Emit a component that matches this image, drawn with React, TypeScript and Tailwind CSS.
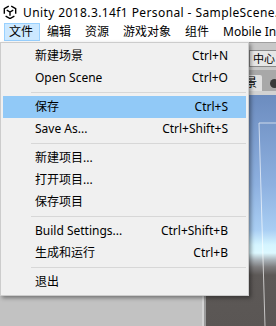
import React from "react";

type Entry =
  | { label: string; shortcut?: string; active?: boolean }
  | "sep";

// File menu entries, top to bottom
const fileMenu: Entry[] = [
  { label: "新建场景", shortcut: "Ctrl+N" },
  { label: "Open Scene", shortcut: "Ctrl+O" },
  "sep",
  { label: "保存", shortcut: "Ctrl+S", active: true },
  { label: "Save As...", shortcut: "Ctrl+Shift+S" },
  "sep",
  { label: "新建项目..." },
  { label: "打开项目..." },
  { label: "保存项目" },
  "sep",
  { label: "Build Settings...", shortcut: "Ctrl+Shift+B" },
  { label: "生成和运行", shortcut: "Ctrl+B" },
  "sep",
  { label: "退出" },
];

const menuBar = ["编辑", "资源", "游戏对象", "组件", "Mobile Input", "窗口", "帮助"];

function UnityLogo() {
  return (
    <svg width="14" height="14" viewBox="0 0 16 16" fill="none" stroke="#000" strokeWidth="1.6" strokeLinejoin="miter" className="shrink-0">
      <path d="M6.6 1.3 L1.5 4.25 V10" />
      <path d="M9.4 1.3 L14.5 4.25 V10" />
      <path d="M3 12.6 L8 15.5 L13 12.6" />
      <path d="M4.3 5.9 L8 8 L11.7 5.9 M8 8 V12.3" />
    </svg>
  );
}

export default function App() {
  return (
    <div className="relative w-[276px] h-[326px] overflow-hidden flex flex-col bg-white text-black font-['Noto_Sans','Noto_Sans_CJK_SC',sans-serif] text-[12px] leading-none">
      {/* Title bar */}
      <div className="h-[23px] shrink-0 flex items-center pl-[3px] bg-white">
        <UnityLogo />
        <span className="ml-[6px] pt-[2px] whitespace-nowrap tracking-[0.4px]">
          Unity 2018.3.14f1 Personal - SampleScene.unity - New Unity Project - PC, Mac &amp; Linux Standalone
        </span>
      </div>

      {/* Menu bar */}
      <div className="h-[19px] shrink-0 flex items-start bg-white whitespace-nowrap">
        <div className="shrink-0 ml-[4px] h-[18px] pl-[4px] pr-[6px] flex items-center bg-[#cce8ff] border border-[#99d1ff]">
          文件
        </div>
        {menuBar.map((m) => (
          <div key={m} className="shrink-0 h-[18px] px-[7px] flex items-center">
            {m}
          </div>
        ))}
      </div>

      {/* Editor */}
      <div className="flex-1 flex flex-col bg-[#c2c2c2]">
        {/* Toolbar */}
        <div className="h-[28px] shrink-0 flex items-start pt-[7px] pl-[8px] bg-[#c8c8c8] border-t border-[#a0a0a0]">
          <div className="shrink-0 flex h-[17px] w-[120px] border border-[#8f8f8f] bg-[#e2e2e2]" />
          <div className="shrink-0 ml-[121px] h-[17px] flex items-center pl-[3px] pr-[6px] border border-[#8a8a8a] bg-[#e6e6e6] text-[11px] whitespace-nowrap">
            中心
          </div>
        </div>

        <div className="flex-1 flex">
          {/* Hierarchy / left docks */}
          <div className="shrink-0 w-[202px] bg-[#c2c2c2]" />
          <div className="shrink-0 w-[2px] bg-[#d4d4d4]" />
          <div className="shrink-0 w-[2px] bg-[#9b9b9b]" />

          {/* Scene view */}
          <div className="flex-1 min-w-0 flex flex-col">
            <div className="h-[21px] shrink-0 flex items-end bg-[#a8a8a8] whitespace-nowrap overflow-hidden">
              <div className="shrink-0 ml-[6px] w-[50px] h-[16px] flex items-center justify-end pr-[5px] bg-[#e0e0e0] rounded-t-[2px]">
                场景
              </div>
              <div className="shrink-0 ml-[4px] h-[16px] flex items-center pl-[4px]">
                <div className="w-[9px] h-[9px] rounded-full bg-[#3a3a3a]" />
                <span className="ml-[3px]">游戏</span>
              </div>
            </div>
            <div className="h-[4px] shrink-0 bg-[#d2d2d2]" />
            <div className="relative flex-1 bg-[linear-gradient(to_bottom,#6c8cbf_0px,#8eb1e0_90px,#a9cef3_135px,#d5f5ff_150px,#dcf8ff_158px,#a9b2b8_165px,#7d7c7d_172px,#5d5957_180px,#5a5654_100%)]">
              <svg className="absolute inset-0 w-full h-full" fill="none">
                <path d="M53 28 L59 231 M53 28 H80" stroke="rgba(255,255,255,0.65)" strokeWidth="1" />
              </svg>
            </div>
          </div>
        </div>
      </div>

      {/* Open File menu */}
      <div className="absolute left-0 top-[42px] w-[249px] py-[2px] bg-[#f0f0f0] border border-[#cccccc] shadow-[2px_2px_4px_rgba(0,0,0,0.4)]">
        {fileMenu.map((e, i) =>
          e === "sep" ? (
            <div key={i} className="h-[7px] flex items-center ml-[30px] mr-[2px]">
              <div className="w-full h-px bg-[#d7d7d7]" />
            </div>
          ) : (
            <div
              key={i}
              className={
                "h-[22px] mx-[2px] flex items-center justify-between pl-[32px] pr-[18px] whitespace-nowrap " +
                (e.active ? "bg-[#91c9f7]" : "")
              }
            >
              <span>{e.label}</span>
              {e.shortcut && <span>{e.shortcut}</span>}
            </div>
          )
        )}
      </div>
    </div>
  );
}
